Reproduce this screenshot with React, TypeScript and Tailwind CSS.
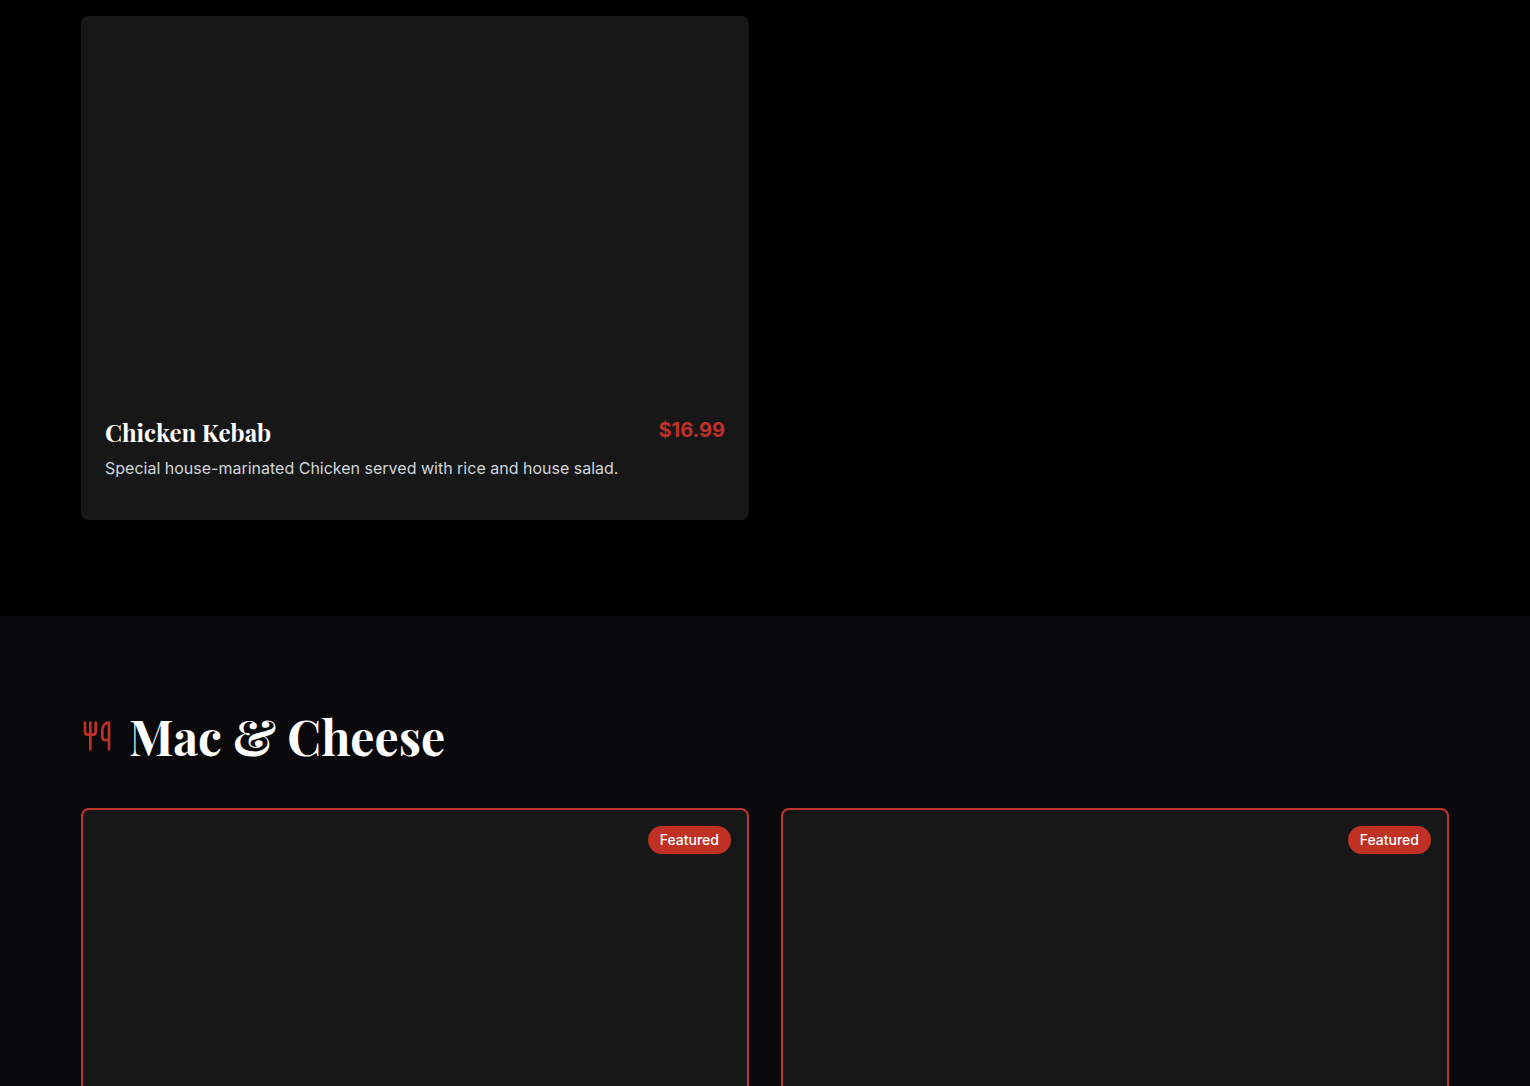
import { Utensils } from "lucide-react";

type MenuItem = {
  name?: string;
  description?: string;
  price?: string;
  featured?: boolean;
};

const kebabs: MenuItem[] = [
  {
    name: "Chicken Kebab",
    description: "Special house-marinated Chicken served with rice and house salad.",
    price: "$16.99",
  },
];

const macAndCheese: MenuItem[] = [{ featured: true }, { featured: true }];

const MenuCard = ({ item }: { item: MenuItem }) => (
  <article
    className={
      item.featured
        ? "relative overflow-hidden rounded-lg border-2 border-[#c0352b] bg-[#171717]"
        : "relative overflow-hidden rounded-lg bg-[#171717]"
    }
  >
    {item.featured && (
      <span className="absolute top-4 right-4 rounded-full bg-[#c03024] px-3 py-1 text-sm font-medium text-white">
        Featured
      </span>
    )}
    <div className="aspect-video" />
    <div className="p-6">
      <div className="mb-2 flex items-start justify-between">
        <h3 className="font-['Playfair_Display','Liberation_Serif',serif] text-2xl font-bold text-white">
          {item.name}
        </h3>
        <span className="text-xl font-bold text-[#c0302b]">{item.price}</span>
      </div>
      <p className="mb-4 text-base text-gray-300">{item.description}</p>
    </div>
  </article>
);

const MenuGrid = ({ items }: { items: MenuItem[] }) => (
  <div className="grid grid-cols-1 gap-8 md:grid-cols-2">
    {items.map((item, i) => (
      <MenuCard key={i} item={item} />
    ))}
  </div>
);

export default function App() {
  return (
    <main className="h-screen overflow-hidden bg-black font-['Inter',sans-serif] text-white">
      <section className="bg-black pt-4 pb-24">
        <div className="mx-auto max-w-[1400px] px-4">
          <MenuGrid items={kebabs} />
        </div>
      </section>

      <section className="bg-[#09090b] py-24">
        <div className="mx-auto max-w-[1400px] px-4">
          <div className="mb-12 flex items-center">
            <Utensils size={32} className="mr-4 text-[#c0302b]" />
            <h2 className="font-['Playfair_Display','Liberation_Serif',serif] text-5xl font-bold text-white">
              Mac & Cheese
            </h2>
          </div>
          <MenuGrid items={macAndCheese} />
        </div>
      </section>
    </main>
  );
}
